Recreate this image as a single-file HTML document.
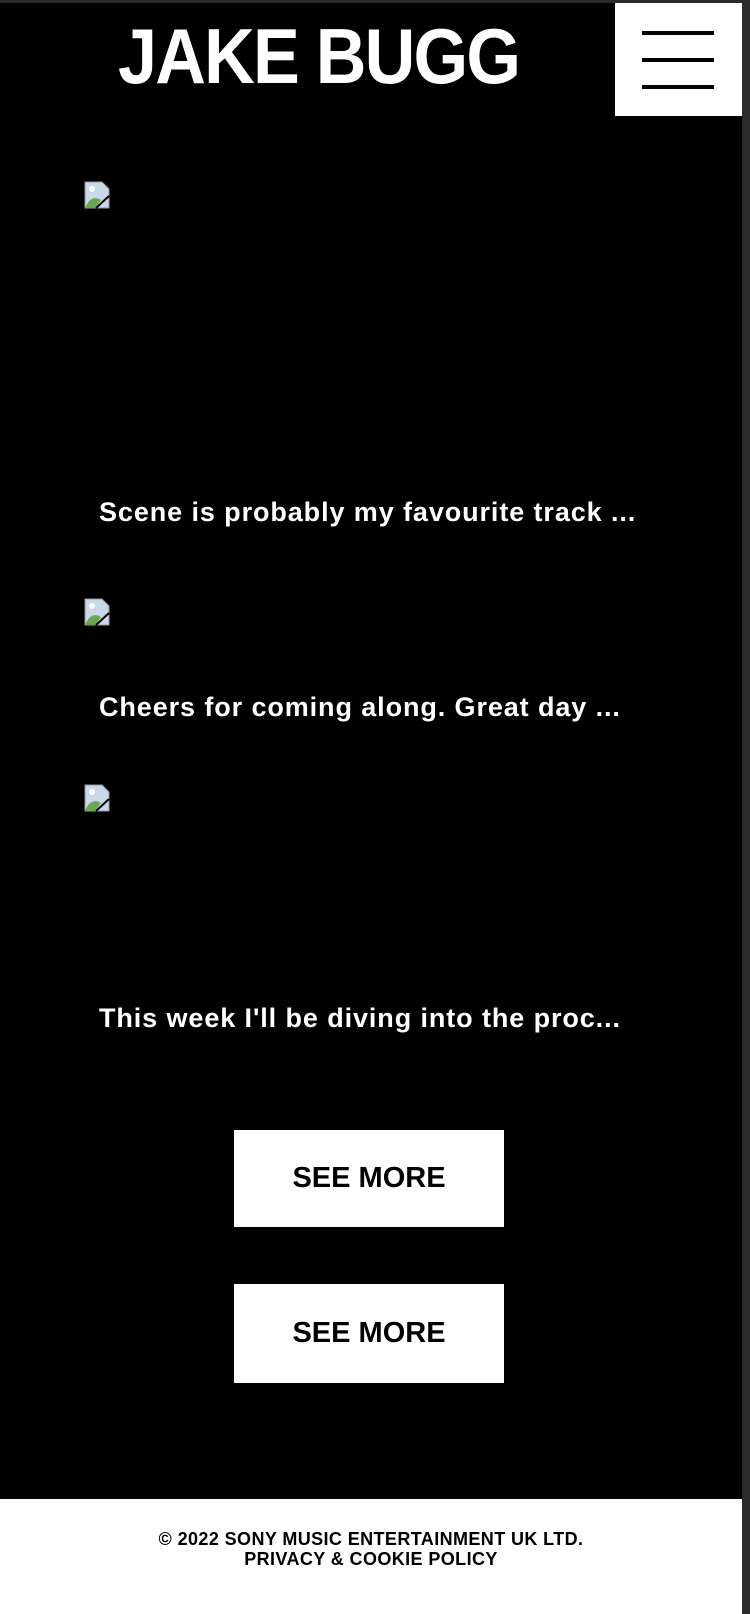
<!DOCTYPE html>
<html><head><meta charset="utf-8"><style>
html,body{margin:0;padding:0;}
body{width:750px;height:1614px;background:#2b2b2b;position:relative;overflow:hidden;font-family:"Liberation Sans",sans-serif;}
.main{position:absolute;left:0;top:3px;width:742px;height:1496px;background:#000;}
.foot{position:absolute;left:0;top:1499px;width:742px;height:115px;background:#fff;text-align:center;font-weight:bold;font-size:18px;letter-spacing:0.4px;line-height:20px;color:#000;}
.menu{position:absolute;left:615px;top:3px;width:127px;height:113px;background:#fff;}
.menu i{position:absolute;left:27px;width:72px;height:4px;background:#000;}
.logo{position:absolute;left:118px;top:11px;color:#fff;font-weight:bold;font-size:78px;letter-spacing:-2px;transform:scaleX(0.9);transform-origin:left top;white-space:nowrap;}
.t{position:absolute;left:99px;color:#fff;font-weight:bold;font-size:27px;letter-spacing:0.9px;white-space:nowrap;}
.img{position:absolute;left:84px;width:26px;height:28px;}
.btn{position:absolute;left:234px;width:270px;background:#fff;color:#000;font-weight:bold;font-size:29px;text-align:center;}
</style></head><body>
<div class="main"></div>
<div class="logo">JAKE BUGG</div>
<div class="menu"><i style="top:28px"></i><i style="top:55px"></i><i style="top:82px"></i></div>
<svg class="img" style="top:181px" viewBox="0 0 26 28"><path d="M1 1h17l7 7v19H1z" fill="#c9d8ea" stroke="#999"/><path d="M1 27c4-10 10-12 16-8l-6 8z" fill="#6aa84f"/><path d="M12 27l13-12" stroke="#000" stroke-width="2"/><circle cx="8" cy="8" r="3" fill="#fff"/></svg>
<svg class="img" style="top:598px" viewBox="0 0 26 28"><path d="M1 1h17l7 7v19H1z" fill="#c9d8ea" stroke="#999"/><path d="M1 27c4-10 10-12 16-8l-6 8z" fill="#6aa84f"/><path d="M12 27l13-12" stroke="#000" stroke-width="2"/><circle cx="8" cy="8" r="3" fill="#fff"/></svg>
<svg class="img" style="top:784px" viewBox="0 0 26 28"><path d="M1 1h17l7 7v19H1z" fill="#c9d8ea" stroke="#999"/><path d="M1 27c4-10 10-12 16-8l-6 8z" fill="#6aa84f"/><path d="M12 27l13-12" stroke="#000" stroke-width="2"/><circle cx="8" cy="8" r="3" fill="#fff"/></svg>
<div class="t" style="top:497px">Scene is probably my favourite track ...</div>
<div class="t" style="top:692px">Cheers for coming along. Great day ...</div>
<div class="t" style="top:1003px">This week I'll be diving into the proc...</div>
<div class="btn" style="top:1130px;height:97px;line-height:97px">SEE MORE</div>
<div class="btn" style="top:1284px;height:99px;line-height:99px">SEE MORE</div>
<div class="foot"><div style="padding-top:30px">© 2022 SONY MUSIC ENTERTAINMENT UK LTD.</div><div>PRIVACY &amp; COOKIE POLICY</div></div>
</body></html>
